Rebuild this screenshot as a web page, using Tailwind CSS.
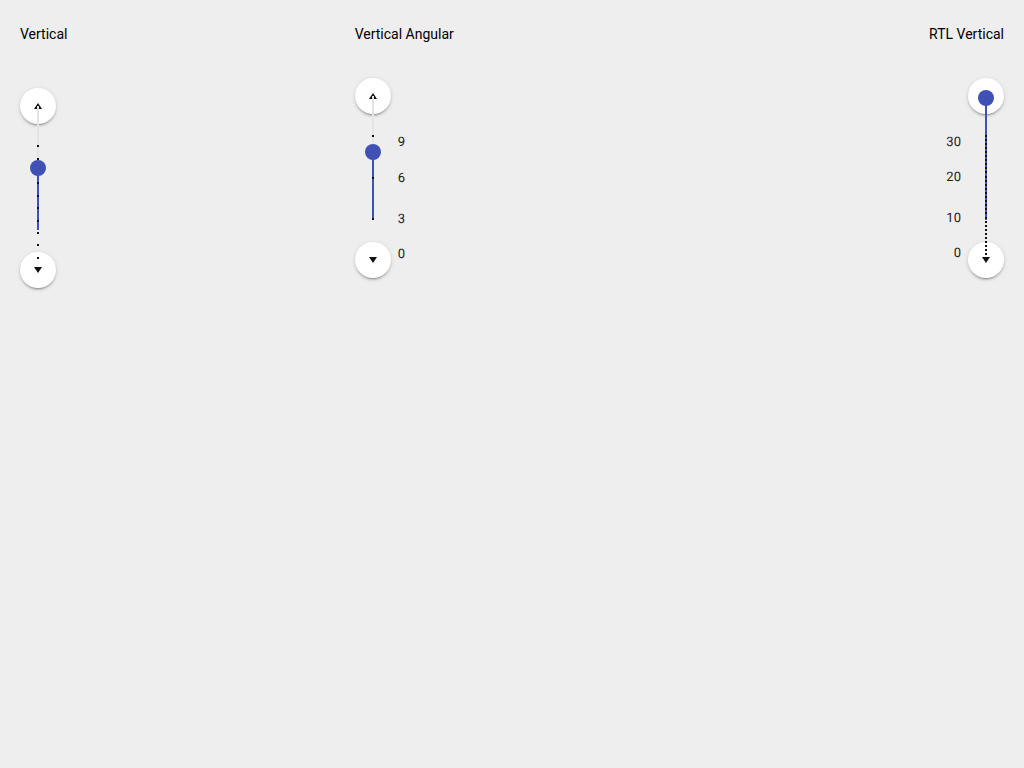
<!DOCTYPE html>
<html lang="en">
<head>
<meta charset="utf-8">
<title>Vertical sliders</title>
<script src="https://cdn.jsdelivr.net/npm/@tailwindcss/browser@4"></script>
</head>
<body class="min-h-screen bg-[#eeeeee] p-5 font-[Roboto,sans-serif] text-sm text-black">
<main class="grid grid-cols-3 gap-5">
  <section>
    <h2 id="t1" class="mt-1 leading-5">Vertical</h2>
    <div class="relative mt-11 flex h-50 w-9 flex-col justify-between">
      <button aria-label="Increase" class="flex size-9 items-center justify-center rounded-full bg-white shadow-[0_2px_2px_0_rgba(0,0,0,0.14),0_3px_1px_-2px_rgba(0,0,0,0.2),0_1px_5px_0_rgba(0,0,0,0.12)]"><svg class="h-[6px] w-2" viewBox="0 0 8 6" fill="#111"><path d="M4 0L8 6H0Z"/></svg></button>
      <button aria-label="Decrease" class="flex size-9 items-center justify-center rounded-full bg-white shadow-[0_2px_2px_0_rgba(0,0,0,0.14),0_3px_1px_-2px_rgba(0,0,0,0.2),0_1px_5px_0_rgba(0,0,0,0.12)]"><svg class="h-[6px] w-2" viewBox="0 0 8 6" fill="#111"><path d="M0 0H8L4 6Z"/></svg></button>
      <svg class="pointer-events-none absolute inset-0 h-50 w-9" viewBox="0 0 36 200" shape-rendering="crispEdges">
        <path fill="#e4e4e4" d="M17 18h2v124h-2z"/><path fill="#3f51b5" d="M17 80h2v62h-2z"/>
        <path fill="#111" d="M17 57h2v2h-2zM17 70h2v2h-2zM17 94h2v2h-2zM17 107h2v2h-2zM17 119h2v2h-2zM17 132h2v2h-2zM17 144h2v2h-2zM17 156h2v2h-2zM17 169h2v2h-2z"/>
      </svg>
      <input type="range" aria-labelledby="t1" min="0" max="122" value="62" class="absolute top-3 left-[10px] h-[138px] w-4 appearance-none bg-transparent [writing-mode:vertical-lr] [direction:rtl] [&::-webkit-slider-thumb]:size-4 [&::-webkit-slider-thumb]:appearance-none [&::-webkit-slider-thumb]:rounded-full [&::-webkit-slider-thumb]:bg-[#3f51b5]">
    </div>
  </section>
  <section>
    <h2 id="t2" class="mt-1 leading-5">Vertical Angular</h2>
    <div class="mt-[34px] flex gap-[7px]">
      <div class="relative flex h-50 w-9 flex-col justify-between">
        <button aria-label="Increase" class="flex size-9 items-center justify-center rounded-full bg-white shadow-[0_2px_2px_0_rgba(0,0,0,0.14),0_3px_1px_-2px_rgba(0,0,0,0.2),0_1px_5px_0_rgba(0,0,0,0.12)]"><svg class="h-[6px] w-2" viewBox="0 0 8 6" fill="#111"><path d="M4 0L8 6H0Z"/></svg></button>
        <button aria-label="Decrease" class="flex size-9 items-center justify-center rounded-full bg-white shadow-[0_2px_2px_0_rgba(0,0,0,0.14),0_3px_1px_-2px_rgba(0,0,0,0.2),0_1px_5px_0_rgba(0,0,0,0.12)]"><svg class="h-[6px] w-2" viewBox="0 0 8 6" fill="#111"><path d="M0 0H8L4 6Z"/></svg></button>
        <svg class="pointer-events-none absolute inset-0 h-50 w-9" viewBox="0 0 36 200" shape-rendering="crispEdges">
          <path fill="#e4e4e4" d="M17 18h2v124h-2z"/><path fill="#3f51b5" d="M17 74h2v68h-2z"/>
          <path fill="#111" d="M17 57h2v2h-2zM17 99h2v2h-2zM17 140h2v2h-2z"/>
        </svg>
        <input type="range" aria-labelledby="t2" min="0" max="122" value="68" class="absolute top-3 left-[10px] h-[138px] w-4 appearance-none bg-transparent [writing-mode:vertical-lr] [direction:rtl] [&::-webkit-slider-thumb]:size-4 [&::-webkit-slider-thumb]:appearance-none [&::-webkit-slider-thumb]:rounded-full [&::-webkit-slider-thumb]:bg-[#3f51b5]">
      </div>
      <div class="flex flex-col pt-[55px] text-[13px] leading-5 text-[#212121] [text-rendering:geometricPrecision]">
        <span>9</span><span class="mt-4">6</span><span class="mt-[21px]">3</span><span class="mt-[15px]">0</span>
      </div>
    </div>
  </section>
  <section dir="rtl">
    <h2 id="t3" class="mt-1 leading-5">RTL Vertical</h2>
    <div class="mt-[34px] flex gap-[7px]">
      <div class="relative flex h-50 w-9 flex-col justify-between">
        <button aria-label="Increase" class="flex size-9 items-center justify-center rounded-full bg-white shadow-[0_2px_2px_0_rgba(0,0,0,0.14),0_3px_1px_-2px_rgba(0,0,0,0.2),0_1px_5px_0_rgba(0,0,0,0.12)]"><svg class="h-[6px] w-2" viewBox="0 0 8 6" fill="#111"><path d="M4 0L8 6H0Z"/></svg></button>
        <button aria-label="Decrease" class="flex size-9 items-center justify-center rounded-full bg-white shadow-[0_2px_2px_0_rgba(0,0,0,0.14),0_3px_1px_-2px_rgba(0,0,0,0.2),0_1px_5px_0_rgba(0,0,0,0.12)]"><svg class="h-[6px] w-2" viewBox="0 0 8 6" fill="#111"><path d="M0 0H8L4 6Z"/></svg></button>
        <svg class="pointer-events-none absolute inset-0 h-50 w-9" viewBox="0 0 36 200" shape-rendering="crispEdges">
          <path fill="#3f51b5" d="M17 20h2v122h-2z"/>
          <path fill="none" stroke="#111" stroke-width="2" stroke-dasharray="2 2" d="M18 57V95M18 98V136M18 139V177"/>
        </svg>
        <input type="range" aria-labelledby="t3" min="0" max="122" value="122" class="absolute top-3 left-[10px] h-[138px] w-4 appearance-none bg-transparent [writing-mode:vertical-lr] [direction:rtl] [&::-webkit-slider-thumb]:size-4 [&::-webkit-slider-thumb]:appearance-none [&::-webkit-slider-thumb]:rounded-full [&::-webkit-slider-thumb]:bg-[#3f51b5]">
      </div>
      <div class="flex flex-col pt-[55px] text-[13px] leading-5 text-[#212121] [text-rendering:geometricPrecision]">
        <span>30</span><span class="mt-[15px]">20</span><span class="mt-[21px]">10</span><span class="mt-[15px]">0</span>
      </div>
    </div>
  </section>
</main>
</body>
</html>
